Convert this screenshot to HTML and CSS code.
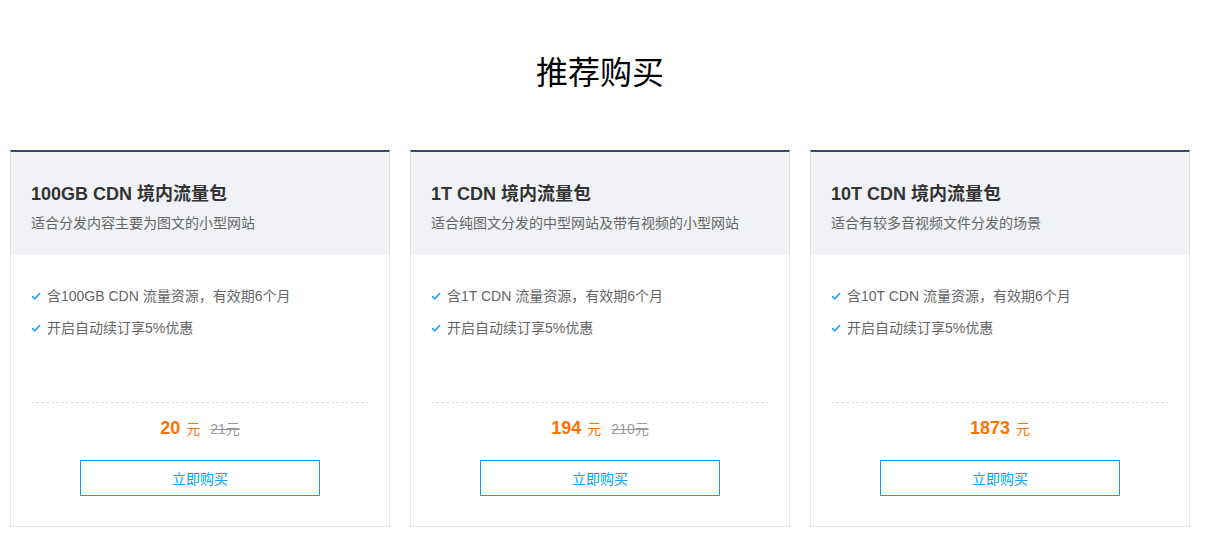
FILE: index.html
```html
<!DOCTYPE html>
<html lang="zh-CN">
<head>
  <meta charset="UTF-8" />
  <meta name="viewport" content="width=device-width, initial-scale=1.0"/>
  <title>推荐购买</title>
  <link rel="stylesheet" href="styles.css">
</head>
<body>
  <div class="section">
    <h2 class="section-title">推荐购买</h2>

    <div class="cards">
      <div class="card">
        <div class="card-head">
          <h3>100GB CDN 境内流量包</h3>
          <p>适合分发内容主要为图文的小型网站</p>
        </div>
        <div class="card-body">
          <ul class="features">
            <li><svg class="check" viewBox="0 0 10 8"><path d="M1 4.2 L3.8 6.8 L9 1.2" /></svg>含100GB CDN 流量资源，有效期6个月</li>
            <li><svg class="check" viewBox="0 0 10 8"><path d="M1 4.2 L3.8 6.8 L9 1.2" /></svg>开启自动续订享5%优惠</li>
          </ul>
          <div class="price">
            <span class="num">20</span><span class="unit">元</span><span class="old">21元</span>
          </div>
          <button class="buy">立即购买</button>
        </div>
      </div>

      <div class="card">
        <div class="card-head">
          <h3>1T CDN 境内流量包</h3>
          <p>适合纯图文分发的中型网站及带有视频的小型网站</p>
        </div>
        <div class="card-body">
          <ul class="features">
            <li><svg class="check" viewBox="0 0 10 8"><path d="M1 4.2 L3.8 6.8 L9 1.2" /></svg>含1T CDN 流量资源，有效期6个月</li>
            <li><svg class="check" viewBox="0 0 10 8"><path d="M1 4.2 L3.8 6.8 L9 1.2" /></svg>开启自动续订享5%优惠</li>
          </ul>
          <div class="price">
            <span class="num">194</span><span class="unit">元</span><span class="old">210元</span>
          </div>
          <button class="buy">立即购买</button>
        </div>
      </div>

      <div class="card">
        <div class="card-head">
          <h3>10T CDN 境内流量包</h3>
          <p>适合有较多音视频文件分发的场景</p>
        </div>
        <div class="card-body">
          <ul class="features">
            <li><svg class="check" viewBox="0 0 10 8"><path d="M1 4.2 L3.8 6.8 L9 1.2" /></svg>含10T CDN 流量资源，有效期6个月</li>
            <li><svg class="check" viewBox="0 0 10 8"><path d="M1 4.2 L3.8 6.8 L9 1.2" /></svg>开启自动续订享5%优惠</li>
          </ul>
          <div class="price">
            <span class="num">1873</span><span class="unit">元</span>
          </div>
          <button class="buy">立即购买</button>
        </div>
      </div>
    </div>
  </div>
</body>
</html>
```

FILE: styles.css
```css
body {
  font-family: "Liberation Sans", "Noto Sans CJK SC", sans-serif;
  background: #fff;
  margin: 0;
  color: #333;
}

.section {
  width: 1180px;
  padding: 50px 10px 0;
}

.section-title {
  margin: 0 0 54px;
  text-align: center;
  font-size: 32px;
  font-weight: 400;
  line-height: 46px;
  color: #000;
}

.cards {
  display: flex;
  gap: 20px;
}

.card {
  width: 380px;
  box-sizing: border-box;
  border: 1px solid #e5e5e5;
  border-top: 2px solid #34486b;
  background: #fff;
}

.card-head {
  background: #f0f2f5;
  padding: 30px 20px 22px;
}

.card-head h3 {
  margin: 0;
  font-size: 18px;
  line-height: 24px;
  font-weight: 700;
  color: #333;
}

.card-head p {
  margin: 7px 0 0;
  font-size: 14px;
  line-height: 20px;
  color: #666;
}

.card-body {
  padding: 0 20px 30px;
}

.features {
  list-style: none;
  margin: 0;
  padding: 31px 0 0;
  height: 116px;
  border-bottom: 1px dashed #ddd;
}

.features li {
  display: flex;
  align-items: center;
  height: 20px;
  font-size: 14px;
  line-height: 20px;
  color: #666;
  margin-bottom: 12px;
}

.check {
  width: 10px;
  height: 8px;
  margin-right: 6px;
  fill: none;
  stroke: #00a4ff;
  stroke-width: 1.5;
}

.price {
  text-align: center;
  padding-top: 13px;
  line-height: 24px;
  color: #ff7200;
}

.price .num {
  font-size: 18px;
  font-weight: 700;
}

.price .unit {
  font-size: 14px;
  margin-left: 6px;
}

.price .old {
  font-size: 14px;
  color: #999;
  text-decoration: line-through;
  margin-left: 10px;
}

.buy {
  display: block;
  width: 240px;
  height: 36px;
  margin: 19px auto 0;
  background: #fff;
  border: 1px solid #00a4ff;
  color: #00a4ff;
  font-family: inherit;
  font-size: 14px;
  cursor: pointer;
}

.buy:hover {
  background: #00a4ff;
  color: #fff;
}
```
